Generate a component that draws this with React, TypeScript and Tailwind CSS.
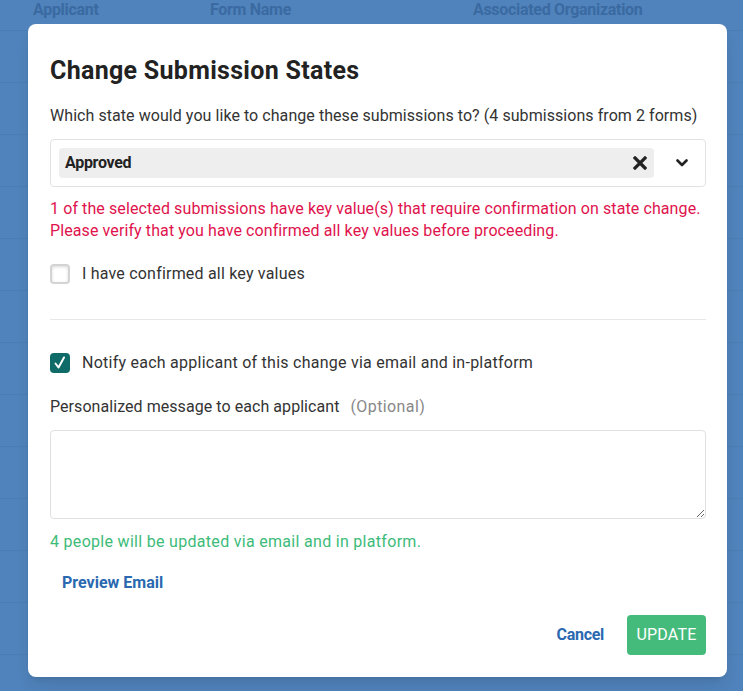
import { useState } from "react";

const rows = Array.from({ length: 13 });

function Checkbox({ checked, onChange }: { checked: boolean; onChange: () => void }) {
  return (
    <button
      type="button"
      onClick={onChange}
      className={`w-5 h-5 rounded-[4px] flex items-center justify-center shrink-0 ${
        checked
          ? "bg-[#0e6b68]"
          : "bg-white border-2 border-[#d4d4d4] shadow-[inset_0_1px_3px_rgba(0,0,0,0.15)]"
      }`}
    >
      {checked && (
        <svg width="14" height="14" viewBox="0 0 14 14" fill="none">
          <path d="M2.5 7.5 L5.5 11.5 L11 1.5" stroke="white" strokeWidth="2" strokeLinecap="round" strokeLinejoin="round" />
        </svg>
      )}
    </button>
  );
}

export default function App() {
  const [confirmed, setConfirmed] = useState(false);
  const [notify, setNotify] = useState(true);
  const [message, setMessage] = useState("");

  return (
    <div className="relative w-[743px] h-[691px] overflow-hidden bg-[#5083bb] font-['Roboto',sans-serif]">
      {/* table behind the overlay */}
      <div className="flex h-[31px] items-start pt-0 border-b border-[#4b7db3] text-[16px] leading-5 font-bold text-[#3a6aa1] tracking-[-0.3px]">
        <span className="pl-[33px] w-[210px]">Applicant</span>
        <span className="w-[263px]">Form Name</span>
        <span>Associated Organization</span>
      </div>
      {rows.map((_, i) => (
        <div key={i} className="h-[52px] border-b border-[#4b7db3]" />
      ))}

      {/* modal */}
      <div className="absolute left-[28px] top-[24px] w-[699px] bg-white rounded-lg px-[22px] pr-[21px] pt-[31px] pb-[22px] shadow-lg">
        <h2 className="text-[25px] leading-[32px] font-bold text-[#222] tracking-[0.3px]">Change Submission States</h2>
        <p className="mt-[17px] text-[16px] leading-6 text-[#333] tracking-[0.06px]">
          Which state would you like to change these submissions to? (4 submissions from 2 forms)
        </p>

        <div className="mt-[11px] h-12 border border-[#e2e2e2] rounded-[4px] flex items-center pl-2 pr-[17px]">
          <div className="flex-1 h-[30px] bg-[#eeeeee] rounded-[4px] flex items-center pl-[6px] pr-[7px]">
            <span className="flex-1 text-[16px] font-bold text-[#222] tracking-[-0.3px]">Approved</span>
            <svg width="14" height="14" viewBox="0 0 14 14">
              <path d="M2 2 L12 12 M12 2 L2 12" stroke="#222" strokeWidth="3.2" strokeLinecap="square" />
            </svg>
          </div>
          <svg className="ml-[22px]" width="12" height="8" viewBox="0 0 12 8">
            <path d="M1.5 1.5 L6 6 L10.5 1.5" stroke="#222" strokeWidth="2.6" fill="none" strokeLinecap="round" strokeLinejoin="round" />
          </svg>
        </div>

        <p className="mt-[11px] text-[16px] leading-[22px] text-[#e0134d] tracking-[0.1px]">
          1 of the selected submissions have key value(s) that require confirmation on state change.
          <br />
          Please verify that you have confirmed all key values before proceeding.
        </p>

        <label className="mt-5 h-6 flex items-center gap-3 cursor-pointer">
          <Checkbox checked={confirmed} onChange={() => setConfirmed(!confirmed)} />
          <span className="text-[16px] text-[#333] tracking-[0.2px]">I have confirmed all key values</span>
        </label>

        <div className="mt-[33px] border-t border-[#e8e8e8]" />

        <label className="mt-[31px] h-6 flex items-center gap-3 cursor-pointer">
          <Checkbox checked={notify} onChange={() => setNotify(!notify)} />
          <span className="text-[16px] text-[#333] tracking-[0.25px]">
            Notify each applicant of this change via email and in-platform
          </span>
        </label>

        <div className="mt-5 text-[16px] leading-6 text-[#333] tracking-[0.06px]">
          Personalized message to each applicant
          <span className="ml-[11px] text-[#888] tracking-[0.4px]">(Optional)</span>
        </div>

        <textarea
          value={message}
          onChange={(e) => setMessage(e.target.value)}
          className="mt-[11px] block w-full h-[89px] border border-[#e0e0e0] rounded-[4px] p-2 text-[16px] outline-none"
        />

        <p className="mt-[11px] text-[16px] leading-6 text-[#3dbb79] tracking-[0.3px]">
          4 people will be updated via email and in platform.
        </p>

        <button className="mt-[17px] ml-3 block text-[16px] leading-6 font-bold text-[#2a69b0] tracking-[0px]">
          Preview Email
        </button>

        <div className="mt-5 flex justify-end items-center">
          <button className="text-[16px] font-bold text-[#2a69b0] tracking-[-0.3px] mr-[23px]">Cancel</button>
          <button className="h-10 w-[79px] rounded-[4px] bg-[#44bb7b] text-white text-[16px] tracking-[0.2px]">
            UPDATE
          </button>
        </div>
      </div>
    </div>
  );
}
